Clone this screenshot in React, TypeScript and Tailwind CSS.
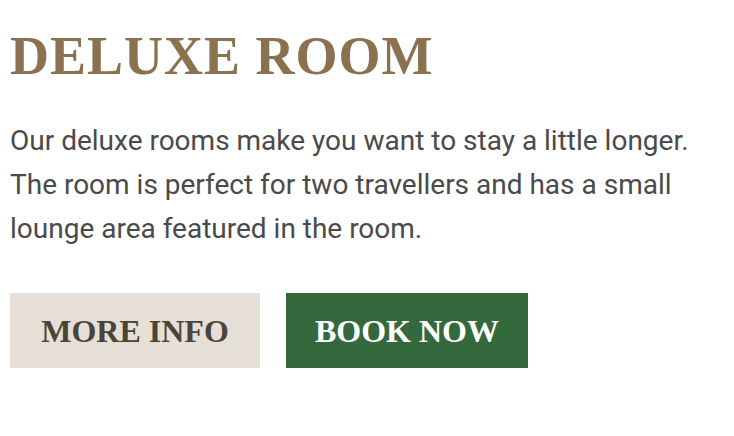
export default function App() {
  return (
    <div className="min-h-screen bg-white px-[10px] pt-[26px]">
      <h1 className="font-['Liberation_Serif',serif] text-[54px] font-bold uppercase leading-[60px] tracking-[1px] text-[#8a7250]">
        Deluxe Room
      </h1>
      <p className="mt-[33px] font-['Roboto',sans-serif] text-[28px] leading-[44px] text-[#4a4a4a]">
        Our deluxe rooms make you want to stay a little longer.
        <br />
        The room is perfect for two travellers and has a small
        <br />
        lounge area featured in the room.
      </p>
      <div className="mt-[42px] flex gap-[26px]">
        <button className="flex h-[75px] w-[250px] items-center justify-center bg-[#e6dfd8] font-['Liberation_Serif',serif] text-[32px] font-bold uppercase text-[#4a4538]">
          More Info
        </button>
        <button className="flex h-[75px] w-[242px] items-center justify-center bg-[#33693c] font-['Liberation_Serif',serif] text-[32px] font-bold uppercase text-white">
          Book Now
        </button>
      </div>
    </div>
  );
}
